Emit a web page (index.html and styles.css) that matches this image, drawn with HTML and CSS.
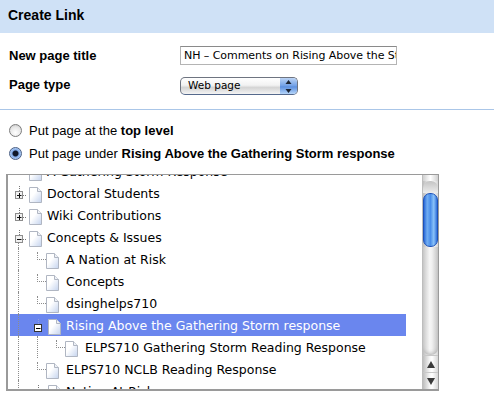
FILE: index.html
```html
<!DOCTYPE html>
<html lang="en">
<head>
    <meta charset="UTF-8">
    <meta name="viewport" content="width=device-width, initial-scale=1.0">
    <title>Create Link</title>
    <link rel="stylesheet" href="styles.css">
</head>
<body>

    <!-- Shared tree icons -->
    <svg class="defs" width="0" height="0">
        <defs>
            <linearGradient id="paper" x1="0" y1="0" x2="1" y2="1">
                <stop offset="0.4" stop-color="#ffffff"/>
                <stop offset="1" stop-color="#c4d3ee"/>
            </linearGradient>
            <symbol id="doc" viewBox="0 0 13 16">
                <path d="M.5.5H8.5L12.5 4.5V15.5H.5Z" fill="url(#paper)" stroke="#b0b6c2"/>
                <path d="M8.5.5V4.5H12.5" fill="#eef1f7" stroke="#b0b6c2"/>
            </symbol>
            <symbol id="plus" viewBox="0 0 12 13">
                <path d="M4.5 0V5M8 9.5H12" stroke="#777" stroke-dasharray="1 1"/>
                <rect x=".5" y="5.5" width="7" height="7" fill="#f1f1f1" stroke="#8d8d8d"/>
                <path d="M2 9.5H6.500M4.500 7V12" stroke="#111"/>
            </symbol>
            <symbol id="minus" viewBox="0 0 12 13">
                <path d="M4.500 0V5M8 9.500H12" stroke="#777" stroke-dasharray="1 1"/>
                <rect x=".5" y="5.500" width="7" height="7" fill="#f1f1f1" stroke="#8d8d8d"/>
                <path d="M2 9.500H6.500" stroke="#111"/>
            </symbol>
            <symbol id="minus-on" viewBox="0 0 12 13">
                <path d="M4.500 0V5" stroke="#8fa0e0" stroke-dasharray="1 1"/>
                <rect x=".5" y="5.500" width="7" height="7" fill="#fff" stroke="#333"/>
                <path d="M2 9.500H6.500" stroke="#000"/>
            </symbol>
        </defs>
    </svg>

    <div class="dialog-title">Create Link</div>

    <div class="form-rows">
        <div class="form-row">
            <label class="form-label" for="page-title">New page title</label>
            <input class="title-input" id="page-title" type="text" value="NH – Comments on Rising Above the St">
        </div>
        <div class="form-row">
            <span class="form-label">Page type</span>
            <div class="select-box">
                <span class="select-text">Web page</span>
                <span class="select-arrows">
                    <svg width="7" height="13" viewBox="0 0 7 13"><path d="M3.500 0L6.500 4H.5ZM.5 9H6.500L3.500 13Z" fill="#1c2433"/></svg>
                </span>
            </div>
        </div>
    </div>

    <hr class="divider">

    <div class="place-options">
        <label class="place-option">
            <input type="radio" name="place" value="top">
            <span>Put page at the <b>top level</b></span>
        </label>
        <label class="place-option">
            <input type="radio" name="place" value="under" checked>
            <span>Put page under <b>Rising Above the Gathering Storm response</b></span>
        </label>
    </div>

    <div class="tree-box">
        <div class="tree-view">
            <div class="tree-list">
                <div class="tree-row">
                    <span class="cell"></span><span class="cell icon-cell"><svg class="doc"><use href="#doc"/></svg></span>
                    <span class="tree-label">A Gathering Storm Response</span>
                </div>
                <div class="tree-row">
                    <span class="cell toggle"><svg class="box"><use href="#plus"/></svg></span><span class="cell icon-cell"><svg class="doc"><use href="#doc"/></svg></span>
                    <span class="tree-label">Doctoral Students</span>
                </div>
                <div class="tree-row">
                    <span class="cell toggle"><svg class="box"><use href="#plus"/></svg></span><span class="cell icon-cell"><svg class="doc"><use href="#doc"/></svg></span>
                    <span class="tree-label">Wiki Contributions</span>
                </div>
                <div class="tree-row">
                    <span class="cell toggle open"><svg class="box"><use href="#minus"/></svg></span><span class="cell icon-cell"><svg class="doc"><use href="#doc"/></svg></span>
                    <span class="tree-label">Concepts &amp; Issues</span>
                </div>
                <div class="tree-row">
                    <span class="cell guide"></span><span class="cell elbow"></span><span class="cell icon-cell leaf"><svg class="doc"><use href="#doc"/></svg></span>
                    <span class="tree-label">A Nation at Risk</span>
                </div>
                <div class="tree-row">
                    <span class="cell guide"></span><span class="cell elbow"></span><span class="cell icon-cell leaf"><svg class="doc"><use href="#doc"/></svg></span>
                    <span class="tree-label">Concepts</span>
                </div>
                <div class="tree-row">
                    <span class="cell guide"></span><span class="cell elbow"></span><span class="cell icon-cell leaf"><svg class="doc"><use href="#doc"/></svg></span>
                    <span class="tree-label">dsinghelps710</span>
                </div>
                <div class="tree-row selected">
                    <span class="cell guide"></span><span class="cell toggle"><svg class="box"><use href="#minus-on"/></svg></span><span class="cell icon-cell"><svg class="doc"><use href="#doc"/></svg></span>
                    <span class="tree-label">Rising Above the Gathering Storm response</span>
                </div>
                <div class="tree-row">
                    <span class="cell guide"></span><span class="cell guide"></span><span class="cell elbow"></span><span class="cell icon-cell leaf"><svg class="doc"><use href="#doc"/></svg></span>
                    <span class="tree-label">ELPS710 Gathering Storm Reading Response</span>
                </div>
                <div class="tree-row">
                    <span class="cell guide"></span><span class="cell elbow"></span><span class="cell icon-cell leaf"><svg class="doc"><use href="#doc"/></svg></span>
                    <span class="tree-label">ELPS710 NCLB Reading Response</span>
                </div>
                <div class="tree-row">
                    <span class="cell guide"></span><span class="cell toggle"><svg class="box"><use href="#plus"/></svg></span><span class="cell icon-cell"><svg class="doc"><use href="#doc"/></svg></span>
                    <span class="tree-label">Nation At Risk response</span>
                </div>
            </div>
        </div>

        <!-- Old Mac style scrollbar -->
        <div class="scrollbar">
            <div class="scroll-cap"></div>
            <div class="scroll-space-top"></div>
            <div class="scroll-thumb"></div>
            <div class="scroll-space-bottom"></div>
            <div class="scroll-btn">
                <svg width="8" height="7" viewBox="0 0 8 7"><path d="M4 0L8 7H0Z" fill="#3a3a3a"/></svg>
            </div>
            <div class="scroll-btn">
                <svg width="8" height="7" viewBox="0 0 8 7"><path d="M0 0H8L4 7Z" fill="#3a3a3a"/></svg>
            </div>
        </div>
    </div>

</body>
</html>
```

FILE: styles.css
```css
body {
    margin: 0;
    font-family: "Liberation Sans", Arial, sans-serif;
    font-size: 13px;
    color: #000;
    background-color: #fff;
    overflow: hidden;
}
.defs {
    display: block;
    height: 0;
}
.dialog-title {
    height: 33px;
    line-height: 31px;
    padding-left: 8px;
    font-weight: bold;
    font-size: 14px;
    background-color: #cfe1f6;
}

/* Title and type rows */
.form-rows {
    padding: 13px 0 0 9px;
}
.form-row {
    display: flex;
    align-items: center;
    height: 19px;
    margin-bottom: 11px;
}
.form-label {
    width: 171px;
    font-weight: bold;
}
.form-row + .form-row .form-label {
    padding-bottom: 3px;
}
.title-input {
    box-sizing: border-box;
    width: 217px;
    height: 19px;
    margin: 0;
    padding: 0 0 0 3px;
    border: 1px solid #b4b4b4;
    border-top-color: #8a8a8a;
    border-radius: 0;
    outline: none;
    font-family: "DejaVu Sans", sans-serif;
    font-size: 11px;
    letter-spacing: -0.06px;
    color: #000;
}
.select-box {
    box-sizing: border-box;
    display: flex;
    width: 118px;
    height: 18px;
    margin-top: 1px;
    border: 1px solid #6e7480;
    border-bottom-color: #55698c;
    border-radius: 5px;
    overflow: hidden;
    background: linear-gradient(#ffffff, #f2f2f2 45%, #d4d4d4 60%, #f4f4f4);
}
.select-text {
    flex: 1;
    padding-left: 7px;
    line-height: 15px;
    font-family: "DejaVu Sans", sans-serif;
    font-size: 10.5px;
}
.select-arrows {
    display: flex;
    align-items: center;
    justify-content: center;
    width: 17px;
    background: linear-gradient(#bcd4f5, #6f9fe6 50%, #5b8fdf 55%, #b6d6fa);
}

.divider {
    height: 1px;
    margin: 14px 0 0;
    border: 0;
    background-color: #aac6e8;
}

/* Radio choices */
.place-options {
    padding: 9px 0 0 8px;
}
.place-option {
    display: flex;
    align-items: center;
    height: 23px;
}
.place-option input {
    appearance: none;
    box-sizing: border-box;
    width: 13px;
    height: 13px;
    margin: 0 7px 0 1px;
    border: 1px solid #7d7d7d;
    border-radius: 50%;
    background: radial-gradient(circle at 50% 70%, #ffffff, #e6e6e6 60%, #bdbdbd);
}
.place-option input:checked {
    border-color: #4a5f85;
    background: radial-gradient(circle, #10182a 0 2.5px, #7fa9e8 3.5px, #b9d2f4 6px);
}

/* Page tree */
.tree-box {
    box-sizing: border-box;
    display: flex;
    width: 433px;
    height: 217px;
    margin: 9px 0 0 6px;
    border: 1px solid #9a9a9a;
    border-width: 1px 1px 2px 2px;
}
.tree-view {
    flex: 1;
    min-width: 0;
    overflow: hidden;
}
.tree-list {
    margin-top: -15px;
    padding-left: 2px;
}
.tree-row {
    display: flex;
    height: 22px;
    width: 396px;
    white-space: nowrap;
}
.tree-row.selected {
    background-color: #6a86ee;
    color: #fff;
}
.tree-label {
    line-height: 23px;
    font-family: "DejaVu Sans", sans-serif;
    font-size: 12.5px;
}
.cell {
    position: relative;
    flex: none;
    width: 19px;
    height: 22px;
}
.cell:first-child {
    width: 18px;
}
.icon-cell .doc {
    display: block;
    width: 13px;
    height: 16px;
    margin: 5px 0 0 1px;
}
.icon-cell.leaf .doc {
    margin-left: -1px;
}

/* Dotted connector lines */
.guide::before,
.elbow::before,
.toggle.open::after {
    content: "";
    position: absolute;
    left: 9px;
    border-left: 1px dotted #8c8c8c;
}
.cell:first-child::before,
.cell:first-child::after {
    left: 8px;
}
.guide::before {
    top: 0;
    bottom: 0;
}
.elbow::before {
    top: 4px;
    height: 7px;
    width: 8px;
    border-bottom: 1px dotted #8c8c8c;
}
.toggle.open::after {
    top: 17px;
    bottom: 0;
}
.toggle .box {
    position: absolute;
    left: 5px;
    top: 4px;
    width: 12px;
    height: 13px;
}
.cell + .toggle .box {
    left: 6px;
    top: 5px;
}

.scrollbar {
    flex: none;
    display: flex;
    flex-direction: column;
    width: 15px;
    border-left: 1px solid #bdbdbd;
    background: linear-gradient(to right, #bdbdbd, #f6f6f6 45%, #ffffff 60%, #d6d6d6);
}
.scroll-cap {
    height: 6px;
    background: linear-gradient(to right, #d0d0d0, #ffffff 50%, #d0d0d0);
}
.scroll-space-top {
    height: 12px;
    border-radius: 7px 7px 0 0;
    background: linear-gradient(#c4c4c4, #ececec);
}
.scroll-thumb {
    box-sizing: border-box;
    height: 54px;
    border: 1px solid #1e52b8;
    border-radius: 7px;
    background: linear-gradient(to right, #2a6ad8, #72aef2 25%, #4a8eea 50%, #8ac2f8 75%, #2f70dc);
}
.scroll-space-bottom {
    flex: 1;
    border-radius: 0 0 7px 7px;
    background: linear-gradient(to right, #c8c8c8, #f6f6f6 45%, #f0f0f0 60%, #c4c4c4);
    box-shadow: inset 0 -4px 4px -3px #b0b0b0;
}
.scroll-btn {
    display: flex;
    align-items: center;
    justify-content: center;
    height: 16px;
    border-top: 1px solid #c8c8c8;
}
.scroll-btn:first-of-type {
    border-top: 0;
}
```
